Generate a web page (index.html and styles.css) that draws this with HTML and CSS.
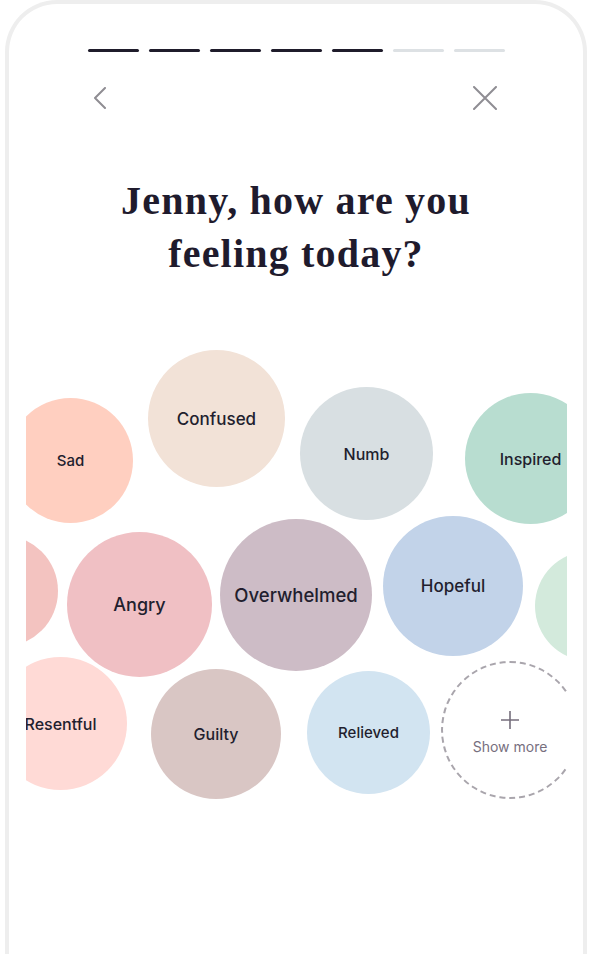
FILE: index.html
```html
<!DOCTYPE html>
<html lang="en">
<head>
<meta charset="utf-8">
<title>How are you feeling</title>
<link rel="stylesheet" href="styles.css">
</head>
<body>
<div class="phone">
  <div class="progress">
    <span class="seg done"></span>
    <span class="seg done"></span>
    <span class="seg done"></span>
    <span class="seg done"></span>
    <span class="seg done"></span>
    <span class="seg"></span>
    <span class="seg"></span>
  </div>
  <div class="nav">
    <svg class="icon-back" width="14" height="22" viewBox="0 0 14 22"><path d="M12 1 L2 11 L12 21" fill="none" stroke="#8f8d93" stroke-width="2" stroke-linecap="round" stroke-linejoin="round"/></svg>
    <svg class="icon-close" width="24" height="24" viewBox="0 0 24 24"><path d="M1 1 L23 23 M23 1 L1 23" fill="none" stroke="#8f8d93" stroke-width="2" stroke-linecap="round"/></svg>
  </div>
  <h1 class="title">Jenny, how are you<br>feeling today?</h1>
  <div class="cloud">
    <div class="bubble sad"><span>Sad</span></div>
    <div class="bubble confused"><span>Confused</span></div>
    <div class="bubble numb"><span>Numb</span></div>
    <div class="bubble inspired"><span>Inspired</span></div>
    <div class="bubble pinkedge"></div>
    <div class="bubble angry"><span>Angry</span></div>
    <div class="bubble overwhelmed"><span>Overwhelmed</span></div>
    <div class="bubble hopeful"><span>Hopeful</span></div>
    <div class="bubble greenedge"></div>
    <div class="bubble resentful"><span>Resentful</span></div>
    <div class="bubble guilty"><span>Guilty</span></div>
    <div class="bubble relieved"><span>Relieved</span></div>
    <div class="bubble more">
      <svg width="20" height="20" viewBox="0 0 20 20"><path d="M10 1 V19 M1 10 H19" stroke="#756e7c" stroke-width="1.6" fill="none"/></svg>
      <span>Show more</span>
    </div>
  </div>
</div>
</body>
</html>
```
FILE: styles.css
```css
html, body {
  margin: 0;
  padding: 0;
  background: #ffffff;
}
body {
  font-family: Inter, "Noto Sans", sans-serif;
  color: #221e2e;
}
.phone {
  box-sizing: border-box;
  margin: 0 5px;
  height: 954px;
  border: 4px solid #eeeeee;
  border-bottom: none;
  border-radius: 52px 52px 0 0;
  background: #ffffff;
  overflow: hidden;
}
.progress {
  display: flex;
  justify-content: center;
  gap: 10px;
  padding-top: 45px;
}
.seg {
  width: 51px;
  height: 3px;
  border-radius: 2px;
  background: #dde1e4;
}
.seg.done {
  background: #1f1c2b;
}
.nav {
  display: flex;
  justify-content: space-between;
  align-items: center;
  padding: 0 86px 0 84px;
  margin-top: 34px;
  height: 24px;
}
.title {
  margin: 64px 0 0;
  text-align: center;
  font-family: "Liberation Serif", "DejaVu Serif", serif;
  font-weight: 700;
  font-size: 40px;
  line-height: 53px;
  color: #1f1b2d;
  letter-spacing: 1.2px;
}
.cloud {
  position: relative;
  margin: 60px 16px 0 17px;
  height: 470px;
  overflow: hidden;
}
.bubble {
  position: absolute;
  border-radius: 50%;
  display: flex;
  flex-direction: column;
  align-items: center;
  justify-content: center;
  font-size: 16px;
  font-weight: 450;
  white-space: nowrap;
}
.sad { left: -18px; top: 58px; width: 125px; height: 125px; background: #ffcfc0; font-size: 15px; }
.confused { left: 122px; top: 10px; width: 137px; height: 137px; background: #f2e2d7; font-size: 17px; }
.numb { left: 274px; top: 47px; width: 133px; height: 133px; background: #d8dfe2; }
.inspired { left: 439px; top: 53px; width: 131px; height: 131px; background: #b8ddd0; }
.pinkedge { left: -80px; top: 195px; width: 112px; height: 112px; background: #f3c3c0; }
.angry { left: 41px; top: 192px; width: 145px; height: 145px; background: #f0c0c4; font-size: 18px; }
.overwhelmed { left: 194px; top: 179px; width: 152px; height: 152px; background: #cdbcc6; font-size: 18.5px; }
.hopeful { left: 357px; top: 176px; width: 140px; height: 140px; background: #c2d3e9; font-size: 17px; }
.greenedge { left: 509px; top: 211px; width: 110px; height: 110px; background: #d3eadc; }
.resentful { left: -32px; top: 317px; width: 133px; height: 133px; background: #ffdad6; }
.guilty { left: 125px; top: 329px; width: 130px; height: 130px; background: #d9c6c4; }
.relieved { left: 281px; top: 331px; width: 123px; height: 123px; background: #d2e4f1; font-size: 15px; }
.more {
  box-sizing: border-box;
  left: 415px;
  top: 321px;
  width: 138px;
  height: 138px;
  border: 2px dashed #a9a5ac;
  color: #776f7e;
  font-size: 14px;
  font-weight: 400;
  gap: 8px;
  padding-top: 4px;
}
```
